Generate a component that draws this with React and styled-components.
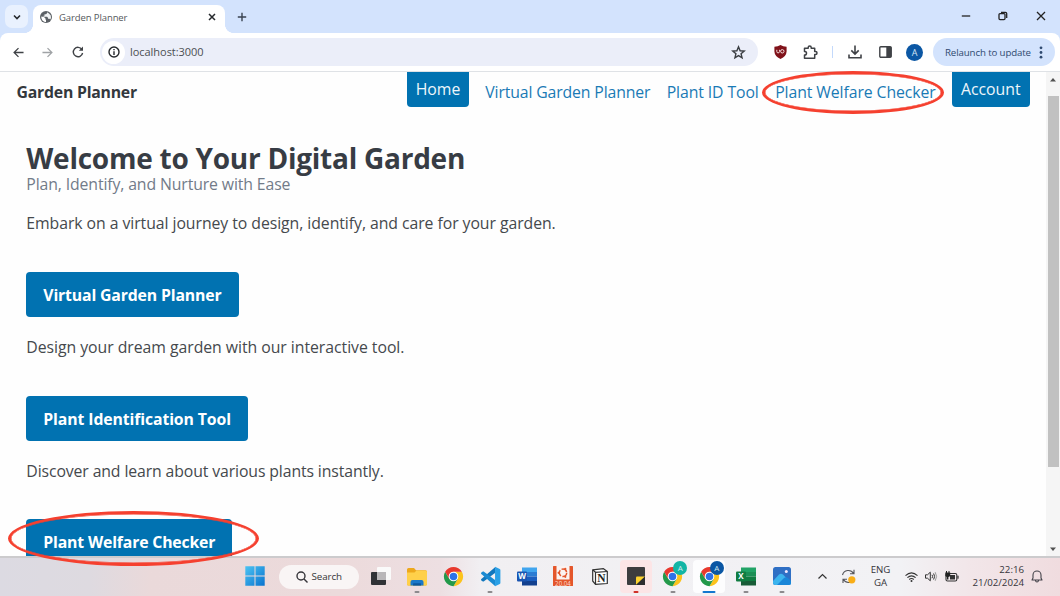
import React from 'react';
import styled, { createGlobalStyle } from 'styled-components';

const GlobalStyle = createGlobalStyle`
  *, *::before, *::after { box-sizing: border-box; }
  body { margin: 0; overflow: hidden; background: #fff; font-family: "Open Sans", "Noto Sans", sans-serif; }
  svg { display: block; flex: none; overflow: visible; }
  h1, p { margin: 0; }
`;

/* ---------- window ---------- */
const Screen = styled.div`
  position: relative;
  width: 1060px;
  height: 596px;
  display: flex;
  flex-direction: column;
  overflow: hidden;
  background: #fff;
`;

const Annotation = styled.div`
  position: absolute;
  left: ${p => p.$x}px;
  top: ${p => p.$y}px;
  width: ${p => p.$w}px;
  height: ${p => p.$h}px;
  border: 3px solid #f5402f;
  border-radius: 50%;
  box-shadow: inset 0 0 0 0.5px #f5402f;
  pointer-events: none;
`;

/* ---------- tab strip ---------- */
const TabStrip = styled.div`
  flex: none;
  height: 33px;
  padding: 5px 0 0 5px;
  display: flex;
  background: #d3e3fd;
`;

const TabSearch = styled.div`
  width: 23px;
  height: 23px;
  border-radius: 7px;
  background: #e9f1fe;
  display: grid;
  place-items: center;
`;

const Tab = styled.div`
  position: relative;
  width: 192px;
  margin-left: 5px;
  padding: 0 8px 4px 7px;
  display: flex;
  align-items: center;
  gap: 7px;
  background: #fff;
  border-radius: 8px 8px 0 0;
  &::before, &::after {
    content: "";
    position: absolute;
    bottom: 0;
    width: 8px;
    height: 8px;
  }
  &::before { left: -8px; background: radial-gradient(circle at 0 0, transparent 7.6px, #fff 8px); }
  &::after { right: -8px; background: radial-gradient(circle at 100% 0, transparent 7.6px, #fff 8px); }
`;

const TabTitle = styled.span`
  flex: 1;
  font-size: 9.5px;
  letter-spacing: -0.1px;
  color: #55585c;
`;

const NewTab = styled.div`
  width: 33px;
  height: 23px;
  display: grid;
  place-items: center;
`;

const WindowControls = styled.div`
  margin-left: auto;
  height: 22px;
  display: grid;
  grid-template-columns: repeat(3, 37.7px);
  place-items: center;
`;

/* ---------- toolbar ---------- */
const ToolbarBack = styled.div`
  flex: none;
  background: #d3e3fd;
`;

const Toolbar = styled.div`
  height: 39px;
  padding: 0 5px 0 4px;
  display: flex;
  align-items: center;
  background: #fff;
  border-radius: 8px 8px 0 0;
  border-bottom: 1px solid #dfe2e6;
`;

const IconButton = styled.div`
  width: ${p => p.$w}px;
  height: 28px;
  flex: none;
  display: grid;
  place-items: center;
`;

const Omnibox = styled.div`
  width: 658px;
  height: 28px;
  margin-left: 7px;
  padding: 0 12px 0 2px;
  display: flex;
  align-items: center;
  gap: 5px;
  border-radius: 14px;
  background: #ebeef9;
`;

const SiteInfo = styled.div`
  width: 23px;
  height: 23px;
  border-radius: 50%;
  background: #fff;
  display: grid;
  place-items: center;
`;

const Address = styled.span`
  flex: 1;
  padding-bottom: 1px;
  font-size: 11px;
  letter-spacing: -0.04px;
  color: #4b4e52;
`;

const ToolDivider = styled.div`
  width: 1px;
  height: 12px;
  margin: 0 6.5px 0 6.5px;
  background: #c3d9fb;
`;

const Avatar = styled.div`
  width: 17px;
  height: 17px;
  margin-left: 5px;
  border-radius: 50%;
  background: #0b57a4;
  color: #d6e6f5;
  font-size: 9px;
  line-height: 17px;
  text-align: center;
`;

const UpdatePill = styled.div`
  width: 122px;
  height: 28px;
  margin-left: auto;
  padding: 0 12px 0 12px;
  display: flex;
  align-items: center;
  justify-content: space-between;
  border-radius: 14px;
  background: #d3e3fd;
  color: #2f4a70;
  font-size: 9.7px;
  letter-spacing: -0.12px;
  white-space: nowrap;
`;

/* ---------- page ---------- */
const Viewport = styled.div`
  flex: none;
  height: 484px;
  display: grid;
  grid-template-columns: 1fr 14px;
  overflow: hidden;
`;

const Page = styled.div`
  height: 484px;
  overflow: hidden;
  background: #fefefe;
`;

const Header = styled.header`
  height: 39.2px;
  padding: 0 16.5px 0 16.5px;
  display: flex;
  align-items: center;
  font-size: 15.8px;
  white-space: nowrap;
`;

const Brand = styled.div`
  margin-right: auto;
  font-weight: 700;
  letter-spacing: -0.22px;
  color: #33383d;
`;

const Nav = styled.nav`
  align-self: stretch;
  display: flex;
  align-items: center;
  gap: 16.4px;
`;

const NavLink = styled.a`
  color: #1a7ab5;
  letter-spacing: ${p => p.$ls}px;
`;

const NavButton = styled.a`
  align-self: flex-start;
  width: ${p => p.$w}px;
  height: 35px;
  line-height: 34px;
  text-align: center;
  border-radius: 0 0 4px 4px;
  background: #0172b1;
  color: #eef6fb;
`;

const Main = styled.main`
  padding: 34px 26.3px 0;
  font-size: 15.8px;
  line-height: 26px;
  white-space: nowrap;
  color: #45494d;
`;

const Title = styled.h1`
  font-size: 28px;
  line-height: 26px;
  letter-spacing: -0.25px;
  color: #373c44;
`;

const Subtitle = styled.p`
  letter-spacing: -0.12px;
  color: #727b89;
`;

const Intro = styled.p`
  margin: 13px 0 35.5px;
  letter-spacing: -0.06px;
`;

const Feature = styled.section`
  height: 123.9px;
  display: flex;
  flex-direction: column;
  align-items: flex-start;
  gap: 17px;
`;

const FeatureButton = styled.a`
  flex: none;
  width: ${p => p.$w}px;
  height: 45.5px;
  padding-left: 17px;
  line-height: 46.5px;
  border-radius: 4px;
  background: #0172b1;
  color: #fff;
  font-weight: 700;
  letter-spacing: ${p => p.$ls}px;
`;

const FeatureText = styled.p`
  letter-spacing: ${p => p.$ls}px;
`;

const Scrollbar = styled.div`
  height: 484px;
  padding: 5px 0 4px;
  display: flex;
  flex-direction: column;
  align-items: center;
  background: #f5f5f5;
`;

const Thumb = styled.div`
  width: 11px;
  height: 371px;
  margin: 14px 0 auto;
  background: #c1c1c1;
`;

/* ---------- taskbar ---------- */
const Taskbar = styled.div`
  flex: none;
  height: 40px;
  padding: 0 0 1px 236.5px;
  display: flex;
  align-items: center;
  border-top: 2px solid #cccbcd;
  background: linear-gradient(90deg, #dcdae2 0, #dedae0 90px, #ead9da 150px, #ecdadb 340px, #eddfe2 440px, #f1eff2 480px, #f2f2f5 900px, #f2e6e9 970px, #f0dcdf 1060px);
`;

const Slot = styled.div`
  width: 36.5px;
  height: 37px;
  flex: none;
  display: flex;
  justify-content: center;
`;

const Tile = styled.div`
  position: relative;
  width: 32px;
  height: 33px;
  margin-top: 2px;
  padding-bottom: 1px;
  display: grid;
  place-items: center;
  border-radius: 4px;
  background: ${p => p.$bg || 'transparent'};
`;

const Indicator = styled.div`
  position: absolute;
  left: 50%;
  bottom: ${p => p.$low || 0}px;
  width: ${p => p.$w || 5}px;
  height: 2.5px;
  transform: translateX(-50%);
  border-radius: 2px;
  background: ${p => p.$color || '#8c8a8d'};
`;

const ProfileBadge = styled.div`
  position: absolute;
  right: 1.5px;
  top: 1px;
  width: 14px;
  height: 14px;
  border-radius: 50%;
  background: ${p => p.$bg};
  color: #cfe9f0;
  font-size: 8px;
  line-height: 14px;
  text-align: center;
`;

const SearchPill = styled.div`
  width: 80px;
  height: 24px;
  margin: 0 4px 0 5.5px;
  padding-left: 17px;
  display: flex;
  align-items: center;
  gap: 4px;
  border-radius: 12px;
  background: #f9f5f5;
  color: #36353a;
  font-size: 9.8px;
  letter-spacing: -0.1px;
`;

const Tray = styled.div`
  margin-left: auto;
  padding-right: 17.5px;
  display: flex;
  align-items: center;
  color: #35343a;
`;

const TrayIcon = styled.div`
  width: ${p => p.$w}px;
  display: grid;
  place-items: center;
`;

const TrayText = styled.div`
  width: ${p => p.$w}px;
  margin-right: ${p => p.$mr || 0}px;
  font-size: 9.7px;
  line-height: 12.8px;
  text-align: ${p => p.$align || 'center'};
  white-space: nowrap;
`;

/* ---------- icons ---------- */
const Stroke = ({ size = 12, w = 1.4, color = '#3f4246', children, box = 12 }) => (
  <svg width={size} height={size} viewBox={`0 0 ${box} ${box}`} fill="none" stroke={color} strokeWidth={w}>{children}</svg>
);

const Chrome = () => (
  <svg width="21" height="21" viewBox="0 0 48 48">
    <path d="M24 13H43.05A22 22 0 0 1 24 46L33.5 29.5Z" fill="#fcc31c" />
    <path d="M14.5 29.5 4.95 13A22 22 0 0 0 24 46L33.5 29.5Z" fill="#23994a" />
    <path d="M4.95 13A22 22 0 0 1 43.05 13H24L14.5 29.5Z" fill="#e8392e" />
    <circle cx="24" cy="24" r="11" fill="#fff" />
    <circle cx="24" cy="24" r="8.6" fill="#2d72e8" />
  </svg>
);

const Globe = () => (
  <svg width="12" height="12" viewBox="0 0 24 24">
    <circle cx="12" cy="12" r="12" fill="#5c6166" />
    <path d="M2.500 11 8 12l3 3v2l1 1v4C6 22 2.500 17 2.500 11Z" fill="#fff" />
    <path d="M14 2.500v2l-2 2H9v3H7v2h7l2 2v2h3l1.500 1.500a10 10 0 0 0 1-8L18 5Z" fill="#f1f3f4" />
  </svg>
);

const Explorer = () => (
  <svg width="20" height="19" viewBox="0 0 20 19">
    <path d="M0 2.500Q0 1 1.500 1H7l2 2.200H18.500Q20 3.200 20 4.700V17q0 1.500-1.500 1.500H1.500Q0 18.500 0 17Z" fill="#eda81c" />
    <path d="M0 5.500H7.500L9.500 3.500H18.500Q20 3.500 20 5V17q0 1.500-1.500 1.500H1.500Q0 18.500 0 17Z" fill="#ffd04a" />
    <path d="M3.500 18.500V15q0-2 2-2h9q2 0 2 2v3.500Z" fill="#1b78c9" />
    <path d="M6 18.500v-1.500q0-.8.8-.8h6.400q.8 0 .8.8v1.500Z" fill="#0d579e" />
  </svg>
);

const VSCode = () => (
  <svg width="21" height="21" viewBox="0 0 24 24">
    <path d="M17.500 1 1.200 15.200 1.200 16.200 3.200 17.800 4.200 17.700 17.500 7.600Z" fill="#1277bd" />
    <path d="M17.500 23 1.200 8.800 1.200 7.800 3.200 6.200 4.200 6.300 17.500 16.400Z" fill="#1a8ad2" />
    <path d="M17.200.8 22.600 3.300Q23.300 3.700 23.300 4.500V19.500Q23.300 20.300 22.600 20.700L17.200 23.200Z" fill="#2aa0e6" />
  </svg>
);

const Office = ({ letter, rows, badge }) => (
  <svg width="20" height="19" viewBox="0 0 20 19">
    {rows.map((c, i) => <rect key={c} x="5" y={i * 4.5 + 0.5} width="15" height="4.500" fill={c} />)}
    <rect x="0" y="4.500" width="10" height="10" rx="1" fill={badge} />
    <text x="5" y="12.400" textAnchor="middle" fontSize="8" fontWeight="700" fill="#fff" fontFamily="Open Sans, sans-serif">{letter}</text>
  </svg>
);

const Ubuntu = () => (
  <svg width="20" height="20" viewBox="0 0 20 20">
    <rect width="20" height="20" rx="0.500" fill="#e4562b" />
    <path d="M3.500 0H16.500V13.500H3.500Z" fill="#fbf3f1" />
    <circle cx="10" cy="6.800" r="3.700" fill="none" stroke="#e4562b" strokeWidth="1.500" strokeDasharray="6.300 1.450" />
    <circle cx="5.600" cy="6.800" r="1.100" fill="#e4562b" />
    <circle cx="12.300" cy="2.800" r="1.100" fill="#e4562b" />
    <circle cx="12.300" cy="10.800" r="1.100" fill="#e4562b" />
    <text x="10" y="19.500" textAnchor="middle" fontSize="6.200" fill="#fbd9ce" fontFamily="Open Sans, sans-serif">20.04</text>
  </svg>
);

const Notion = () => (
  <svg width="16" height="17" viewBox="0 0 16 17">
    <path d="M.7 1.800 11.500.7 15.300 3.500V15.500L3.500 16.300.7 13Z" fill="#fff" stroke="#333" strokeWidth="1.200" strokeLinejoin="round" />
    <path d="M.7 1.800 3.500 4.300 15.300 3.500M3.500 4.300V16.300" fill="none" stroke="#333" strokeWidth="1.200" />
    <text x="9.400" y="13.800" textAnchor="middle" fontSize="11.500" fontWeight="700" fill="#222" fontFamily="Liberation Serif, serif">N</text>
  </svg>
);

const Notes = () => (
  <svg width="18" height="18" viewBox="0 0 18 18">
    <rect width="18" height="18" rx="1" fill="#3d3c3e" />
    <path d="M9 18V10.500Q9 9.500 10 9.500H18Z" fill="#ffd22e" />
    <path d="M9 18 18 9.500V18Z" fill="#2e2d2f" />
  </svg>
);

const Photos = () => (
  <svg width="18" height="18" viewBox="0 0 18 18">
    <defs><clipPath id="photo"><rect width="18" height="18" rx="2.500" /></clipPath></defs>
    <g clipPath="url(#photo)">
      <rect width="18" height="18" fill="#2f6fc4" />
      <path d="M0 14 6 7.500Q8 6 10 7.500L18 16V18H0Z" fill="#3cb4ee" />
      <path d="M4 18 11 11Q13 9.500 15 11L18 14V18Z" fill="#1a86d8" />
      <circle cx="13.300" cy="4.500" r="1.500" fill="#f4e9ff" />
    </g>
  </svg>
);

const features = [
  { label: 'Virtual Garden Planner', w: 212.3, ls: -0.15, text: 'Design your dream garden with our interactive tool.', tls: -0.04 },
  { label: 'Plant Identification Tool', w: 221.5, ls: -0.11, text: 'Discover and learn about various plants instantly.', tls: -0.115 },
  { label: 'Plant Welfare Checker', w: 206, ls: -0.17, text: '', tls: 0 },
];

const apps = [
  {
    id: 'taskview', icon: (
      <svg width="20" height="19" viewBox="0 0 20 19">
        <rect x="6" y="0" width="14" height="13" rx="1" fill="#fafafa" />
        <rect x="0" y="5" width="15" height="13" rx="1" fill="#303236" />
        <rect x="6" y="5" width="9" height="8" fill="#b9b7b9" />
      </svg>
    ),
  },
  { id: 'explorer', icon: <Explorer />, mark: {} },
  { id: 'chrome', icon: <Chrome /> },
  { id: 'code', icon: <VSCode />, mark: {} },
  { id: 'word', icon: <Office letter="W" badge="#1a54b0" rows={['#41a5ee', '#2b7cd3', '#1a5dbe', '#12408f']} /> },
  { id: 'ubuntu', icon: <Ubuntu /> },
  { id: 'notion', icon: <Notion /> },
  { id: 'notes', icon: <Notes />, bg: '#fce5e6', mark: { $color: '#cf3128' } },
  { id: 'chrome-a', icon: <Chrome />, mark: {}, profile: '#12b5a5' },
  { id: 'chrome-b', icon: <Chrome />, bg: '#fdfdfe', mark: { $color: '#1277cf', $w: 13 }, profile: '#0b57a4' },
  { id: 'excel', icon: <Office letter="X" badge="#107c41" rows={['#21a366', '#1b8f55', '#107c41', '#185c37']} />, mark: {} },
  { id: 'photos', icon: <Photos />, mark: {} },
];

export default function App() {
  return (
    <Screen>
      <GlobalStyle />
      <TabStrip>
        <TabSearch>
          <Stroke size={8} box={8} w={1.6} color="#26292d"><path d="M1 2.500 4 5.500 7 2.500" /></Stroke>
        </TabSearch>
        <Tab>
          <Globe />
          <TabTitle>Garden Planner</TabTitle>
          <Stroke size={10} box={10} w={1.5} color="#26292d"><path d="M2 2 8 8M8 2 2 8" /></Stroke>
        </Tab>
        <NewTab>
          <Stroke size={10} box={10} w={1.4} color="#3a4350"><path d="M5 .8V9.200M.8 5H9.200" /></Stroke>
        </NewTab>
        <WindowControls>
          <Stroke size={10} box={10} w={1.3} color="#222"><path d="M.8 5H9.200" /></Stroke>
          <Stroke size={10} box={10} w={1.3} color="#222">
            <rect x="1" y="2.600" width="6" height="6" rx="1" />
            <path d="M3 1.400H7.500Q8.700 1.400 8.700 2.600V7" />
          </Stroke>
          <Stroke size={10} box={10} w={1.3} color="#222"><path d="M1 1 9 9M9 1 1 9" /></Stroke>
        </WindowControls>
      </TabStrip>

      <ToolbarBack>
        <Toolbar>
          <IconButton $w={29}>
            <Stroke size={11}><path d="M11.500 6H1.500M6 1.200 1.200 6 6 10.800" /></Stroke>
          </IconButton>
          <IconButton $w={29}>
            <Stroke size={11} color="#a0a3a6"><path d="M.5 6H10.500M6 1.200 10.800 6 6 10.800" /></Stroke>
          </IconButton>
          <IconButton $w={31}>
            <Stroke>
              <path d="M9.900 3.400A4.700 4.700 0 1 0 10.600 7" />
              <path d="M11 .6V4.800H6.800Z" fill="#3f4246" stroke="none" />
            </Stroke>
          </IconButton>
          <Omnibox>
            <SiteInfo>
              <Stroke size={12} w={1.4} color="#26292d"><circle cx="6" cy="6" r="5" /><path d="M6 5.300V9M6 3V4.300" /></Stroke>
            </SiteInfo>
            <Address>localhost:3000</Address>
            <Stroke size={15} box={24} w={2.2} color="#3a3d42">
              <path d="M12 3 14.600 9.200 21.200 9.700 16.100 14 17.700 20.500 12 17 6.300 20.500 7.900 14 2.800 9.700 9.400 9.200Z" />
            </Stroke>
          </Omnibox>
          <IconButton $w={44}>
            <svg width="13" height="14" viewBox="0 0 13 14">
              <path d="M6.500 0Q9 1.800 12.600 1.800V6.500Q12.300 11.500 6.500 14 .7 11.500.4 6.500V1.800Q4 1.800 6.500 0Z" fill="#80121a" />
              <path d="M2.800 4.800V6.500Q2.800 7.900 4.100 7.900T5.600 6.500V4.800" fill="none" stroke="#f3dcdc" strokeWidth="1" />
              <circle cx="8.300" cy="6.300" r="1.700" fill="none" stroke="#f3dcdc" strokeWidth="1" />
            </svg>
          </IconButton>
          <IconButton $w={16}>
            <Stroke size={15} box={15} w={1.5}>
              <path d="M1.500 3.200H5.200V2.400Q5.200 1 6.700 1T8.200 2.400V3.200H11.700V6.400H12.500Q14 6.400 14 7.900T12.500 9.400H11.700V13.300H1.500V10Q3.500 10 3.500 8.200T1.500 6.400Z" strokeLinejoin="round" />
            </Stroke>
          </IconButton>
          <IconButton $w={7} />
          <ToolDivider />
          <IconButton $w={31}>
            <Stroke size={14} box={14} w={1.6}>
              <path d="M7 .5V8.800M3.300 5.400 7 9.100 10.700 5.400M1 9.500V12.700H13V9.500" />
            </Stroke>
          </IconButton>
          <IconButton $w={31}>
            <svg width="13" height="12" viewBox="0 0 13 12">
              <rect x=".8" y=".8" width="11.400" height="10.400" rx="1" fill="none" stroke="#3f4246" strokeWidth="1.400" />
              <rect x="7.300" y="1" width="5" height="10" fill="#3f4246" />
            </svg>
          </IconButton>
          <Avatar>A</Avatar>
          <UpdatePill>
            Relaunch to update
            <svg width="4" height="13" viewBox="0 0 4 13" fill="#2f4a70">
              <circle cx="2" cy="1.800" r="1.400" /><circle cx="2" cy="6.500" r="1.400" /><circle cx="2" cy="11.200" r="1.400" />
            </svg>
          </UpdatePill>
        </Toolbar>
      </ToolbarBack>

      <Viewport>
        <Page>
          <Header>
            <Brand>Garden Planner</Brand>
            <Nav>
              <NavButton $w={61.8}>Home</NavButton>
              <NavLink $ls={-0.14}>Virtual Garden Planner</NavLink>
              <NavLink $ls={-0.1}>Plant ID Tool</NavLink>
              <NavLink $ls={-0.09}>Plant Welfare Checker</NavLink>
              <NavButton $w={77.5}>Account</NavButton>
            </Nav>
          </Header>
          <Main>
            <Title>Welcome to Your Digital Garden</Title>
            <Subtitle>Plan, Identify, and Nurture with Ease</Subtitle>
            <Intro>Embark on a virtual journey to design, identify, and care for your garden.</Intro>
            {features.map(f => (
              <Feature key={f.label}>
                <FeatureButton $w={f.w} $ls={f.ls}>{f.label}</FeatureButton>
                <FeatureText $ls={f.tls}>{f.text}</FeatureText>
              </Feature>
            ))}
          </Main>
        </Page>
        <Scrollbar>
          <svg width="6" height="5" viewBox="0 0 6 5"><path d="M0 4.500 3 1 6 4.500Z" fill="#505050" /></svg>
          <Thumb />
          <svg width="6" height="5" viewBox="0 0 6 5"><path d="M0 .5 3 4 6 .5Z" fill="#505050" /></svg>
        </Scrollbar>
      </Viewport>

      <Taskbar>
        <Slot>
          <Tile>
            <svg width="20" height="20" viewBox="0 0 20 20">
              <defs>
                <linearGradient id="win" x1="0" y1="0" x2="1" y2="1">
                  <stop offset="0" stopColor="#4cc3f2" /><stop offset="1" stopColor="#0873cf" />
                </linearGradient>
              </defs>
              <path d="M.3.300H9.500V9.500H.3ZM10.500.3H19.700V9.500H10.500ZM.3 10.500H9.500V19.700H.3ZM10.500 10.500H19.700V19.700H10.500Z" fill="url(#win)" />
            </svg>
          </Tile>
        </Slot>
        <SearchPill>
          <Stroke size={12} w={1.4} color="#36353a"><circle cx="5" cy="5" r="4" /><path d="M8 8 11.500 11.500" /></Stroke>
          Search
        </SearchPill>
        {apps.map(a => (
          <Slot key={a.id}>
            <Tile $bg={a.bg}>
              {a.icon}
              {a.profile && <ProfileBadge $bg={a.profile}>A</ProfileBadge>}
              {a.mark && <Indicator {...a.mark} />}
            </Tile>
          </Slot>
        ))}
        <Tray>
          <TrayIcon $w={26}>
            <Stroke size={9} box={9} w={1.2} color="#333"><path d="M.5 6.500 4.500 2.500 8.500 6.500" /></Stroke>
          </TrayIcon>
          <TrayIcon $w={27}>
            <svg width="15" height="15" viewBox="0 0 15 15" fill="none" stroke="#55555a" strokeWidth="1.100">
              <path d="M1.500 6A6 6 0 0 1 12.500 4.500M13 .8V4.800H9M13.500 9A6 6 0 0 1 2.500 10.500M2 14V10.200H6" />
              <circle cx="10.800" cy="10.800" r="3.600" fill="#f9ae17" stroke="none" />
            </svg>
          </TrayIcon>
          <TrayText $w={37}>ENG<br />GA</TrayText>
          <TrayIcon $w={25}>
            <svg width="13" height="10" viewBox="0 0 13 10" fill="none" stroke="#333" strokeWidth="1.100">
              <path d="M.5 3.700Q6.500-1.800 12.500 3.700M2.400 5.700Q6.500 1.900 10.600 5.700M4.200 7.500Q6.500 5.500 8.800 7.500" />
              <circle cx="6.500" cy="8.900" r="1" fill="#333" stroke="none" />
            </svg>
          </TrayIcon>
          <TrayIcon $w={14}>
            <svg width="12" height="11" viewBox="0 0 12 11" fill="none" stroke="#333" strokeWidth="1">
              <path d="M.5 3.800H2.500L5.300 1.200V9.800L2.500 7.200H.5ZM7 3.800Q8.200 5.500 7 7.200M8.600 2.500Q10.600 5.500 8.600 8.500" />
              <path d="M10.200 1.200Q13 5.500 10.200 9.800" stroke="#999" />
            </svg>
          </TrayIcon>
          <TrayIcon $w={27}>
            <svg width="14" height="11" viewBox="0 0 14 11">
              <rect x="1" y="2.500" width="10.800" height="7.500" rx="1.500" fill="none" stroke="#333" strokeWidth="1.100" />
              <rect x="5" y="4" width="5" height="4.500" fill="#333" />
              <rect x="12.400" y="4.700" width="1.200" height="3" fill="#333" />
              <path d="M1 0H2V1.500H3.500V0H4.500V1.500H5.200V4.500Q5 5.800 3.400 6V8.500H2V6Q.5 5.800.3 4.500V1.500H1Z" fill="#222" />
            </svg>
          </TrayIcon>
          <TrayText $w={59} $align="right" $mr={6.5}>22:16<br />21/02/2024</TrayText>
          <svg width="12" height="13" viewBox="0 0 12 13" fill="none" stroke="#44434a" strokeWidth="1.100">
            <path d="M1 10H11L10 8V5A4 4 0 0 0 2 5V8ZM4.500 10.500Q4.700 12 6 12T7.500 10.500" strokeLinejoin="round" />
          </svg>
        </Tray>
      </Taskbar>

      <Annotation $x={762} $y={71} $w={182} $h={43} />
      <Annotation $x={8} $y={511} $w={251} $h={55} />
    </Screen>
  );
}
